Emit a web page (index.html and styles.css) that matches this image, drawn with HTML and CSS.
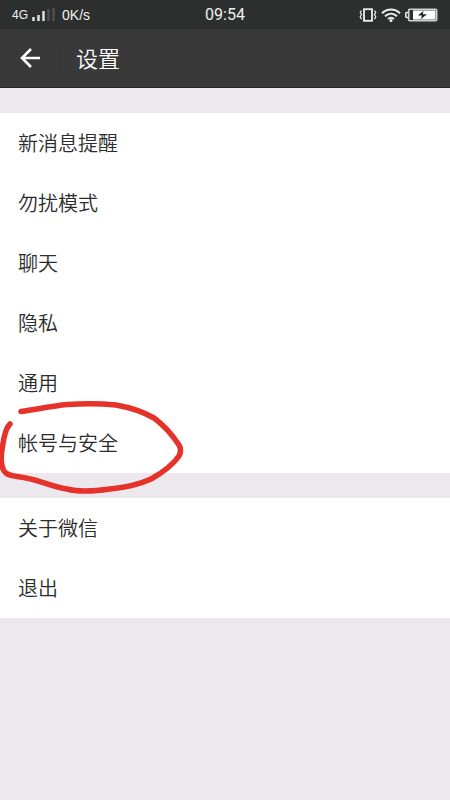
FILE: index.html
```html
<!DOCTYPE html>
<html lang="zh-CN">
<head>
    <meta charset="UTF-8">
    <meta name="viewport" content="width=device-width, initial-scale=1.0">
    <title>设置</title>
    <link rel="stylesheet" href="styles.css">
</head>
<body>
    <div class="status-bar">
        <div class="status-left">
            <span class="network">4G</span>
            <svg class="signal" width="24" height="14" viewBox="0 0 24 14">
                <path d="M1.500 9v4M6.500 7v6M11.500 3v10" stroke="#e6e6e6" stroke-width="2.400"/>
                <path d="M16.500 1v12M21.500 0v13" stroke="#505151" stroke-width="2.400"/>
            </svg>
            <span class="speed">0K/s</span>
        </div>
        <span class="clock">09:54</span>
        <div class="status-right">
            <svg width="18" height="14" viewBox="0 0 18 14" fill="none" stroke="#f0f0f0">
                <rect x="5" y="1.200" width="8" height="11.600" stroke-width="1.800"/>
                <path d="M2.500 2.500l-1.300 2 1.300 2-1.300 2.300 1.300 2.500M15.500 2.500l1.300 2-1.300 2 1.300 2.300-1.300 2.500" stroke-width="1.200"/>
            </svg>
            <svg width="20" height="14" viewBox="0 0 20 14" fill="none" stroke="#f0f0f0" stroke-width="2">
                <path d="M1 5.200c5.200-5 12.800-5 18 0M4 8.200c3.600-3.400 8.400-3.400 12 0M7 11c1.900-1.600 4.100-1.600 6 0"/>
                <circle cx="10" cy="12.400" r="1.500" fill="#f0f0f0" stroke="none"/>
            </svg>
            <svg width="33" height="14" viewBox="0 0 33 14">
                <path d="M3.500 4.500H1.800a1 1 0 0 0-1 1v3a1 1 0 0 0 1 1h1.700" fill="none" stroke="#f0f0f0" stroke-width="1.500"/>
                <rect x="3.700" y="1.200" width="28" height="11.600" rx="1" fill="none" stroke="#d0d0d0" stroke-width="1.600"/>
                <rect x="8" y="2.400" width="22.500" height="9.200" fill="#fff"/>
                <path d="M18.500 2.800l-5.500 4.700h4l-1.300 3.700 6.300-5h-4.300z" fill="#222"/>
            </svg>
        </div>
    </div>

    <header class="title-bar">
        <button class="back" type="button" aria-label="返回">
            <svg width="22" height="20" viewBox="0 0 22 20" fill="none" stroke="#fff" stroke-width="2.600">
                <path d="M11 1L2 10l9 9M2 10h18"/>
            </svg>
        </button>
        <h1>设置</h1>
    </header>

    <main>
        <nav class="group">
            <a class="item" href="#notify">新消息提醒</a>
            <a class="item" href="#disturb">勿扰模式</a>
            <a class="item" href="#chat">聊天</a>
            <a class="item" href="#privacy">隐私</a>
            <a class="item" href="#general">通用</a>
            <a class="item marked" href="#account">帐号与安全
                <svg class="mark" width="200" height="110" viewBox="0 0 200 110" fill="none" stroke="#e5322a" stroke-width="5.500" stroke-linecap="round" stroke-linejoin="round">
                    <path d="M21 21.500C38 19 53 16 67 14.500C85 13.500 105 14 116 15C133 18 147 24 154 28C165 36 173 46 179 55Q182 60 179 66C172 76 160 84 151 89C136 96 120 98 110 99C96 101 78 102 67 99C52 97 42 91 26 88C17 86 8 87 4 81C-1 72 2 59 4 48Q6 38 10 34"/>
                </svg>
            </a>
        </nav>
        <nav class="group">
            <a class="item" href="#about">关于微信</a>
            <a class="item" href="#logout">退出</a>
        </nav>
    </main>
</body>
</html>
```

FILE: styles.css
```css
* {
    box-sizing: border-box;
}
body {
    margin: 0;
    min-height: 100vh;
    background-color: #ece8ed;
    font-family: "Roboto", "Noto Sans CJK SC", sans-serif;
    color: #2c2c2c;
}
.status-bar {
    display: grid;
    grid-template-columns: 1fr auto 1fr;
    align-items: center;
    height: 29px;
    padding: 0 12px;
    background-color: #2d2f2f;
    color: #f0f0f0;
}
.status-left,
.status-right {
    display: flex;
    align-items: center;
    gap: 4px;
}
.status-left {
    font-family: "Liberation Sans", sans-serif;
    font-size: 14px;
}
.network {
    font-size: 12px;
}
.speed {
    margin-left: 2px;
}
.status-right {
    justify-content: flex-end;
}
.clock {
    font-size: 16px;
}
.title-bar {
    display: flex;
    align-items: center;
    height: 59px;
    background-color: #393939;
    border-bottom: 1px solid #252626;
    color: #fff;
}
.back {
    display: flex;
    align-items: center;
    height: 28px;
    padding: 0 18px 0 20px;
    background: none;
    border: none;
    border-right: 1px solid #303030;
    cursor: pointer;
}
h1 {
    margin: 0;
    padding: 0 15px 2px;
    font-size: 22px;
    font-weight: 350;
}
main {
    display: flex;
    flex-direction: column;
    gap: 25px;
    padding: 25px 0;
}
.group {
    background-color: #fff;
}
.item {
    display: flex;
    align-items: center;
    height: 60px;
    padding: 0 18px 2px;
    font-size: 20px;
    font-weight: 350;
    color: inherit;
    text-decoration: none;
}
.marked {
    position: relative;
}
/* hand-drawn circle over the row */
.mark {
    position: absolute;
    top: -23px;
    left: 0;
    pointer-events: none;
}
```
